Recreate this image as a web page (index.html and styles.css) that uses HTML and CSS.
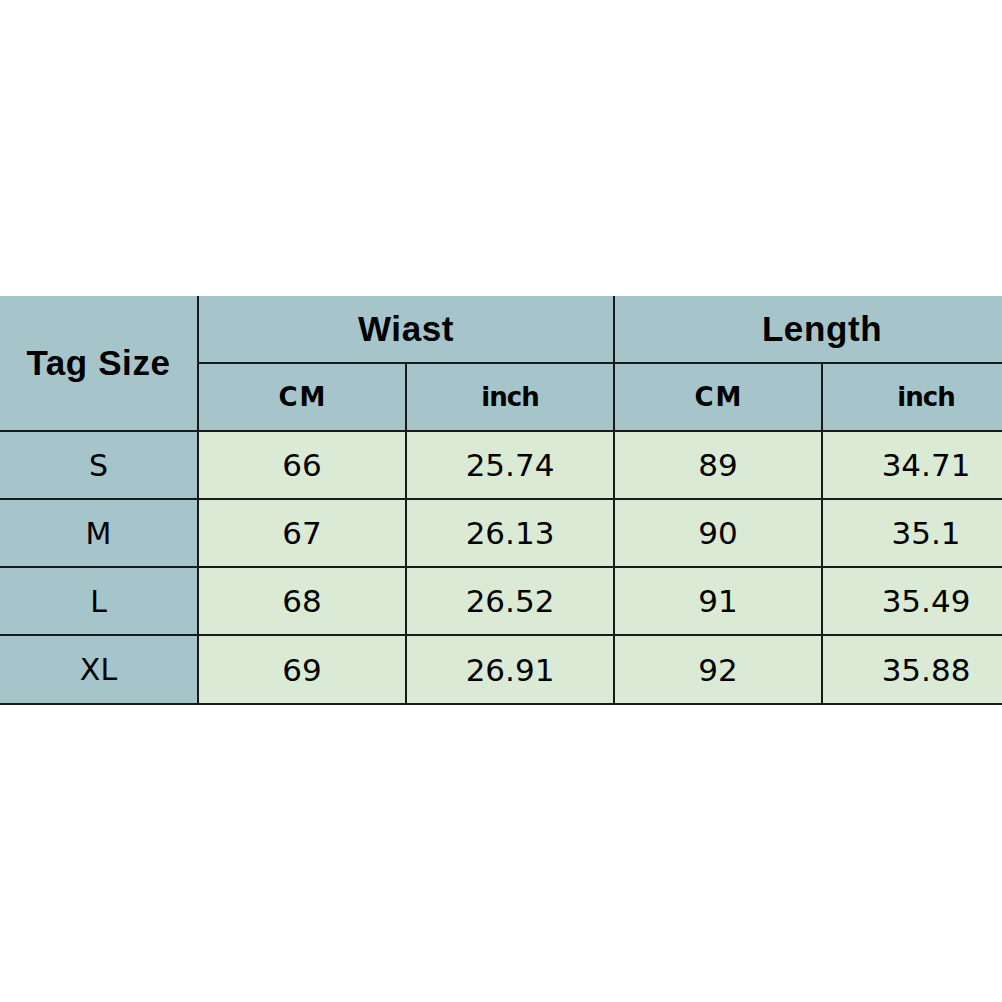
FILE: index.html
```html
<!DOCTYPE html>
<html>
<head>
<meta charset="utf-8">
<title>Size chart</title>
<link rel="stylesheet" href="styles.css">
</head>
<body>
<div class="page">
  <table class="chart">
    <colgroup>
      <col class="c-tag">
      <col class="c-val">
      <col class="c-val">
      <col class="c-val">
      <col class="c-val">
    </colgroup>
    <thead>
      <tr class="r-group">
        <th class="tag-head" rowspan="2">Tag Size</th>
        <th class="group" colspan="2">Wiast</th>
        <th class="group" colspan="2">Length</th>
      </tr>
      <tr class="r-unit">
        <th class="unit cm">CM</th>
        <th class="unit">inch</th>
        <th class="unit cm">CM</th>
        <th class="unit">inch</th>
      </tr>
    </thead>
    <tbody>
      <tr class="r-data">
        <th class="size">S</th>
        <td>66</td><td>25.74</td><td>89</td><td>34.71</td>
      </tr>
      <tr class="r-data">
        <th class="size">M</th>
        <td>67</td><td>26.13</td><td>90</td><td>35.1</td>
      </tr>
      <tr class="r-data">
        <th class="size">L</th>
        <td>68</td><td>26.52</td><td>91</td><td>35.49</td>
      </tr>
      <tr class="r-data r-last">
        <th class="size">XL</th>
        <td>69</td><td>26.91</td><td>92</td><td>35.88</td>
      </tr>
    </tbody>
  </table>
</div>
</body>
</html>
```
FILE: styles.css
```css
html, body {
  margin: 0;
  padding: 0;
  background: #ffffff;
  overflow: hidden;
}

.page {
  width: 1002px;
  height: 1002px;
  padding-top: 296px;
  box-sizing: border-box;
  overflow: hidden;
}

.chart {
  border-collapse: collapse;
  table-layout: fixed;
  width: 1030px;
  color: #000;
}

.c-tag { width: 198px; }
.c-val { width: 208px; }

.chart th,
.chart td {
  padding: 0;
  text-align: center;
  vertical-align: middle;
  border-right: 2px solid #1a1a1a;
  border-bottom: 2px solid #1a1a1a;
}

.chart thead th {
  background: #a6c5cb;
}

.r-group { height: 67px; }
.r-unit { height: 68px; }
.r-data { height: 68px; }
.r-last { height: 69px; }

.tag-head,
.group {
  font-family: "Liberation Sans", Arial, sans-serif;
  font-weight: bold;
  font-size: 35px;
  letter-spacing: 0.6px;
}

.tag-head {
  padding: 0 14px 2px 0;
}

.unit {
  font-family: "Comic Sans MS", "DejaVu Sans", sans-serif;
  font-weight: bold;
  font-size: 26px;
  letter-spacing: -1px;
}

.unit.cm {
  letter-spacing: 2px;
  padding-left: 2px;
}

.size {
  background: #a6c5cb;
  font-family: "Comic Sans MS", "DejaVu Sans", sans-serif;
  font-weight: normal;
  font-size: 30px;
  padding-right: 8px;
}

.chart td {
  background: #daead4;
  font-family: "Comic Sans MS", "DejaVu Sans", sans-serif;
  font-size: 31px;
  font-weight: normal;
}
```
